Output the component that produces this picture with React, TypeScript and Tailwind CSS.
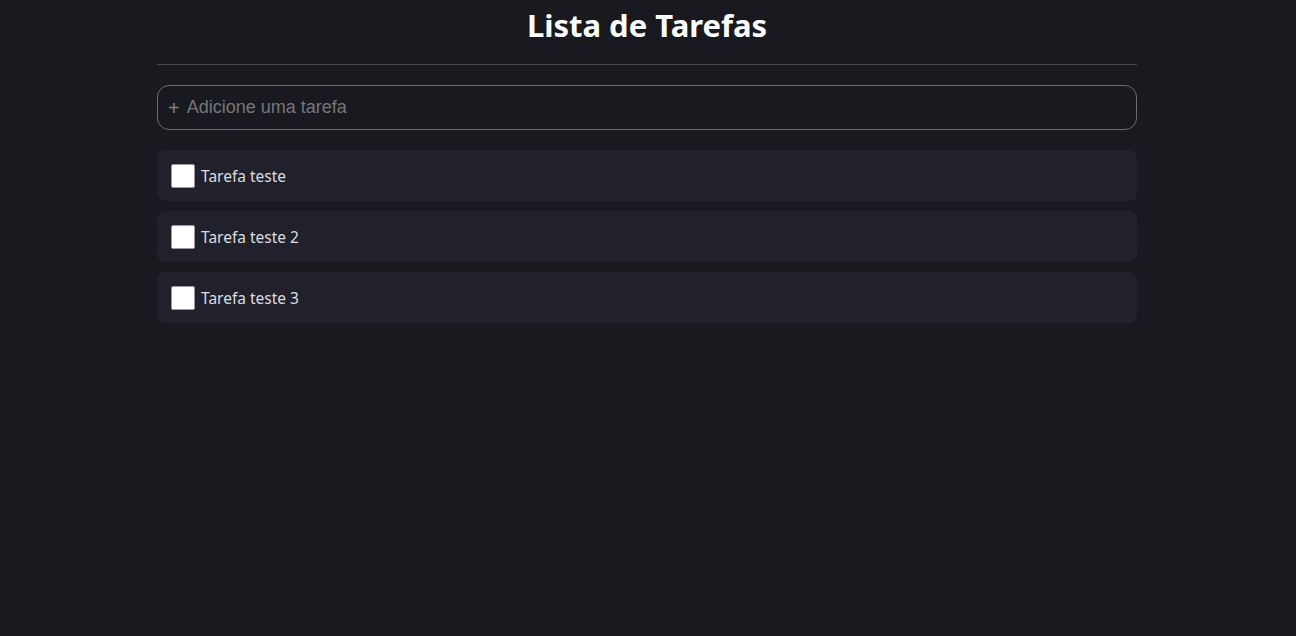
import React from "react";

const tasks = ["Tarefa teste", "Tarefa teste 2", "Tarefa teste 3"];

export default function App() {
  return (
    <div className="min-h-[636px] w-full bg-[#191920]" style={{ fontFamily: "'Noto Sans', sans-serif" }}>
      <div className="ml-[157px] w-[980px]">
        <h1 className="pt-[3px] text-center text-[31px] font-bold leading-[44px] text-white">Lista de Tarefas</h1>
        <div className="mt-[17px] h-px bg-[#47474d]" />
        <div className="mt-[20px] flex h-[45px] items-center rounded-[12px] border border-[#6b6b70] pl-[10px] pr-[10px]" style={{ fontFamily: "'Liberation Sans', Arial, sans-serif" }}>
          <span className="text-[20px] leading-none text-[#808084]">+</span>
          <span className="ml-[7px] text-[18px] text-[#76767a]">Adicione uma tarefa</span>
        </div>
        <div className="mt-[20px] flex flex-col gap-[10px]">
          {tasks.map((t) => (
            <div key={t} className="flex h-[51px] items-center rounded-[8px] bg-[#21212c] px-[14px]">
              <div className="h-[24px] w-[24px] rounded-[2px] border border-[#9a9aa0] bg-white" />
              <span className="ml-[6px] pt-[2px] text-[15.5px] text-[#dcdce0]">{t}</span>
            </div>
          ))}
        </div>
      </div>
    </div>
  );
}
